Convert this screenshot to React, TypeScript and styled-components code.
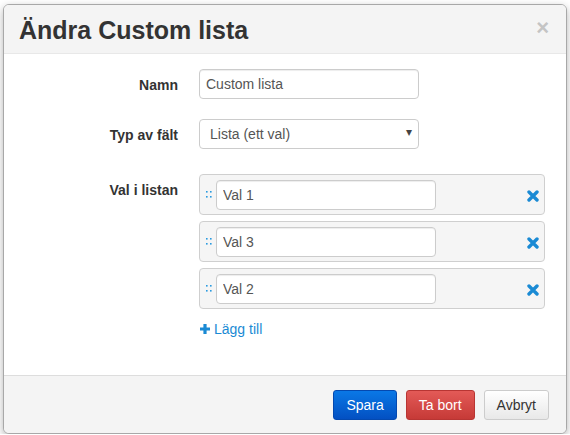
import React from 'react'
import styled, { createGlobalStyle } from 'styled-components'

const GlobalStyle = createGlobalStyle`
  html, body {
    margin: 0;
    padding: 0;
    background: #ffffff;
    font-family: 'Liberation Sans', Arial, sans-serif;
    font-size: 14px;
    color: #333;
  }
  * { box-sizing: border-box; }
`

const options = ['Val 1', 'Val 3', 'Val 2']

const App: React.FC = () => {
  return (
    <>
      <GlobalStyle />
      <Modal>
        <Header>
          <Title>Ändra Custom lista</Title>
          <Close>×</Close>
        </Header>
        <Body>
          <FormRow $gap={20}>
            <Label>Namn</Label>
            <Control>
              <Input defaultValue="Custom lista" />
            </Control>
          </FormRow>
          <FormRow $gap={25}>
            <Label>Typ av fält</Label>
            <Control>
              <SelectWrap>
                <Select defaultValue="single">
                  <option value="single">Lista (ett val)</option>
                </Select>
                <Caret>▾</Caret>
              </SelectWrap>
            </Control>
          </FormRow>
          <FormRow $gap={0}>
            <Label>Val i listan</Label>
            <Control>
              <ItemList>
                {options.map((o) => (
                  <Item key={o}>
                    <Handle>
                      <svg width="6" height="9" viewBox="0 0 6 9">
                        <rect x="0" y="1" width="1.6" height="1.6" fill="#2a9be0" />
                        <rect x="4" y="1" width="1.6" height="1.6" fill="#2a9be0" />
                        <rect x="0" y="6" width="1.6" height="1.6" fill="#2a9be0" />
                        <rect x="4" y="6" width="1.6" height="1.6" fill="#2a9be0" />
                      </svg>
                    </Handle>
                    <ItemInput defaultValue={o} />
                    <Remove>
                      <svg width="12" height="12" viewBox="0 0 12 12">
                        <path d="M2 2 L10 10 M10 2 L2 10" stroke="#1a8ad4" strokeWidth="3.4" strokeLinecap="round" />
                      </svg>
                    </Remove>
                  </Item>
                ))}
              </ItemList>
              <AddLink>
                <svg width="12" height="12" viewBox="0 0 12 12">
                  <path d="M6 1 V11 M1 6 H11" stroke="#1a8ad4" strokeWidth="3.2" />
                </svg>
                Lägg till
              </AddLink>
            </Control>
          </FormRow>
        </Body>
        <Footer>
          <Button $variant="primary">Spara</Button>
          <Button $variant="danger">Ta bort</Button>
          <Button $variant="default">Avbryt</Button>
        </Footer>
      </Modal>
    </>
  )
}

export default App

const Modal = styled.div`
  margin: 4px 0 0 3px;
  width: 564px;
  height: 430px;
  border: 1px solid #a8a8a8;
  border-radius: 6px;
  background: #fff;
  overflow: hidden;
  display: flex;
  flex-direction: column;
  box-shadow: 0 3px 9px rgba(0, 0, 0, 0.3);
`

const Header = styled.div`
  display: flex;
  align-items: center;
  justify-content: space-between;
  height: 49px;
  padding: 0 17px 0 15px;
  background: #f4f4f4;
  border-bottom: 1px solid #e8e8e8;
`

const Title = styled.h3`
  margin: 0;
  font-size: 25px;
  font-weight: bold;
  color: #333;
  line-height: 1;
  padding-top: 2px;
`

const Close = styled.span`
  font-size: 22px;
  font-weight: bold;
  color: #c4c4c4;
  line-height: 1;
  margin-top: -2px;
`

const Body = styled.div`
  flex: 1;
  padding: 15px 0 0 0;
`

const FormRow = styled.div<{ $gap?: number }>`
  display: grid;
  grid-template-columns: 174px 1fr;
  column-gap: 21px;
  margin-bottom: ${({ $gap }) => ($gap === undefined ? 21 : $gap)}px;
`

const Label = styled.label`
  text-align: right;
  font-weight: bold;
  font-size: 14px;
  color: #333;
  padding-top: 6px;
  line-height: 20px;
`

const Control = styled.div`
  display: flex;
  flex-direction: column;
`

const Input = styled.input`
  width: 220px;
  height: 30px;
  padding: 4px 6px;
  font-family: 'Liberation Sans', Arial, sans-serif;
  font-size: 14px;
  color: #555;
  border: 1px solid #ccc;
  border-radius: 4px;
  background: #fff;
  box-shadow: inset 0 1px 1px rgba(0, 0, 0, 0.075);
  outline: none;
`

const SelectWrap = styled.div`
  position: relative;
  width: 220px;
`

const Select = styled.select`
  appearance: none;
  width: 220px;
  height: 30px;
  padding: 4px 10px;
  font-family: 'Liberation Sans', Arial, sans-serif;
  font-size: 14px;
  color: #555;
  border: 1px solid #ccc;
  border-radius: 4px;
  background: #fff;
  outline: none;
`

const Caret = styled.span`
  position: absolute;
  right: 7px;
  top: 6px;
  font-size: 12px;
  color: #444;
  pointer-events: none;
`

const ItemList = styled.div`
  display: flex;
  flex-direction: column;
  gap: 6px;
  width: 346px;
`

const Item = styled.div`
  display: flex;
  align-items: center;
  height: 41px;
  padding: 0 5px 0 5px;
  background: #f5f5f5;
  border: 1px solid #cfcfcf;
  border-radius: 4px;
`

const Handle = styled.span`
  width: 11px;
  display: flex;
  align-items: center;
  padding-left: 1px;
`

const ItemInput = styled(Input)`
  height: 30px;
  width: 220px;
`

const Remove = styled.span`
  margin-left: auto;
  display: flex;
  align-items: center;
  margin-top: 2px;
`

const AddLink = styled.a`
  display: inline-flex;
  align-items: center;
  gap: 3px;
  margin-top: 10px;
  color: #1a8ad4;
  font-size: 14px;
  line-height: 20px;
  cursor: pointer;
`

const variants = {
  primary: {
    bg: 'linear-gradient(to bottom, #0a78e6 0%, #0350c2 100%)',
    border: '#0449b0',
    color: '#fff',
  },
  danger: {
    bg: 'linear-gradient(to bottom, #e35a57 0%, #c63a37 100%)',
    border: '#b83533',
    color: '#fff',
  },
  default: {
    bg: 'linear-gradient(to bottom, #ffffff 0%, #e8e8e8 100%)',
    border: '#cccccc',
    color: '#333',
  },
}

const Footer = styled.div`
  display: flex;
  justify-content: flex-end;
  align-items: center;
  gap: 9px;
  height: 58px;
  padding: 0 17px 0 0;
  background: #f4f4f4;
  border-top: 1px solid #dddddd;
`

const Button = styled.button<{ $variant: keyof typeof variants }>`
  height: 30px;
  padding: 0 12px;
  font-family: 'Liberation Sans', Arial, sans-serif;
  font-size: 14px;
  border-radius: 3px;
  background: ${({ $variant }) => variants[$variant].bg};
  border: 1px solid ${({ $variant }) => variants[$variant].border};
  color: ${({ $variant }) => variants[$variant].color};
  cursor: pointer;
`
